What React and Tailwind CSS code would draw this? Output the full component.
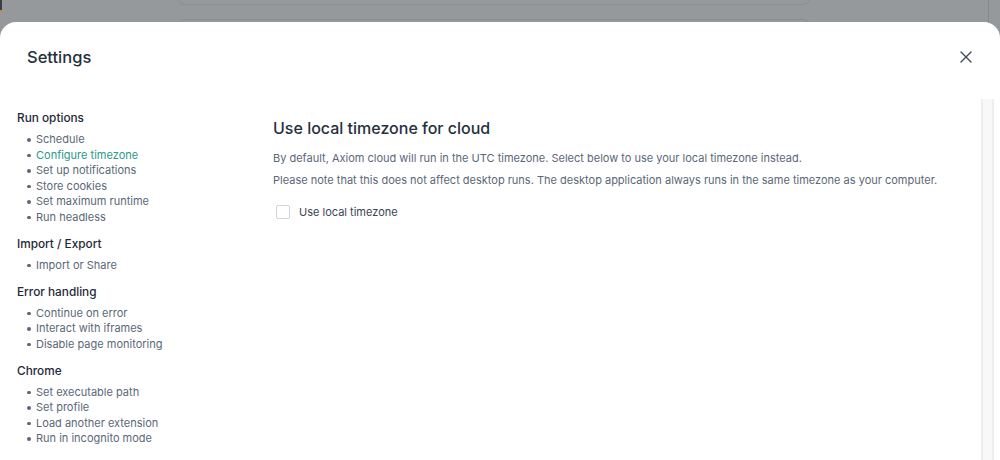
import React from "react";

const sections = [
  {
    title: "Run options",
    items: [
      "Schedule",
      "Configure timezone",
      "Set up notifications",
      "Store cookies",
      "Set maximum runtime",
      "Run headless",
    ],
  },
  { title: "Import / Export", items: ["Import or Share"] },
  {
    title: "Error handling",
    items: ["Continue on error", "Interact with iframes", "Disable page monitoring"],
  },
  {
    title: "Chrome",
    items: [
      "Set executable path",
      "Set profile",
      "Load another extension",
      "Run in incognito mode",
    ],
  },
];

export default function App() {
  return (
    <div
      className="relative w-[1000px] h-[460px] overflow-hidden bg-[#95999c]"
      style={{ fontFamily: "Inter, 'Noto Sans', sans-serif" }}
    >
      {/* faint background cards behind the overlay */}
      <div className="absolute left-[177px] top-[-20px] w-[634px] h-[25px] rounded-b-[8px] border border-[#8b8f92]" />
      <div className="absolute left-[177px] top-[19px] w-[634px] h-[40px] rounded-t-[8px] border border-[#8b8f92]" />
      <div className="absolute left-[988px] top-0 w-px h-[30px] bg-[#85898c]" />
      <div className="absolute left-0 top-0 w-[2px] h-[10px] bg-[#3a3f44]" />
      <div className="absolute left-0 top-[10px] w-[2px] h-[2px] bg-[#d9822b]" />

      <div className="relative mt-[22px] h-[438px] rounded-t-[16px] bg-white flex flex-col">
        {/* header */}
        <div className="h-[77px] shrink-0 flex items-center justify-between pl-[27px] pr-[28px] pb-[7px]">
          <h1 className="text-[16.5px] font-medium text-[#26303d] leading-none">Settings</h1>
          <button className="text-[#3f4b5b]">
            <svg width="12" height="12" viewBox="0 0 12 12" fill="none">
              <path d="M1 1L11 11M11 1L1 11" stroke="currentColor" strokeWidth="1.4" strokeLinecap="round" />
            </svg>
          </button>
        </div>

        {/* body */}
        <div className="flex flex-1 min-h-0">
          <nav className="w-[273px] shrink-0 pl-[17px] pt-[10px]">
            {sections.map((s, i) => (
              <div key={s.title} className={i > 0 ? "mt-[9.25px]" : ""}>
                <div className="text-[11.8px] font-medium text-[#1f2937] leading-[18px] h-[18px]">{s.title}</div>
                <ul className="mt-[5.25px]">
                  {s.items.map((it) => (
                    <li
                      key={it}
                      className={
                        "flex items-center leading-[15.5px] h-[15.5px] text-[11px] " +
                        (it === "Configure timezone" ? "text-[#2a9a8c]" : "text-[#5b6779]")
                      }
                    >
                      <span className="ml-[10px] mr-[5.5px] w-[3.5px] h-[3.5px] rounded-full bg-[#5b6779]" />
                      {it}
                    </li>
                  ))}
                </ul>
              </div>
            ))}
          </nav>

          <main className="flex-1 pt-[17px]">
            <h2 className="text-[16px] font-medium text-[#26303d] leading-[24px]">
              Use local timezone for cloud
            </h2>
            <p className="mt-[10px] text-[11px] leading-[16px] text-[#5b6779]">
              By default, Axiom cloud will run in the UTC timezone. Select below to use your local timezone instead.
            </p>
            <p className="mt-[6px] text-[11px] leading-[16px] text-[#5b6779]">
              Please note that this does not affect desktop runs. The desktop application always runs in the same timezone as your computer.
            </p>
            <label className="mt-[16px] ml-[3px] flex items-center gap-[9px]">
              <span className="w-[14px] h-[14px] rounded-[2px] border border-[#cfd6df] bg-white" />
              <span className="text-[11px] text-[#3a4553] leading-[16px]">Use local timezone</span>
            </label>
          </main>

          <div className="mr-[6px] w-[13px] shrink-0 border-x-2 border-[#eeeeee] bg-[#f8f8f8]" />
        </div>
      </div>
    </div>
  );
}
